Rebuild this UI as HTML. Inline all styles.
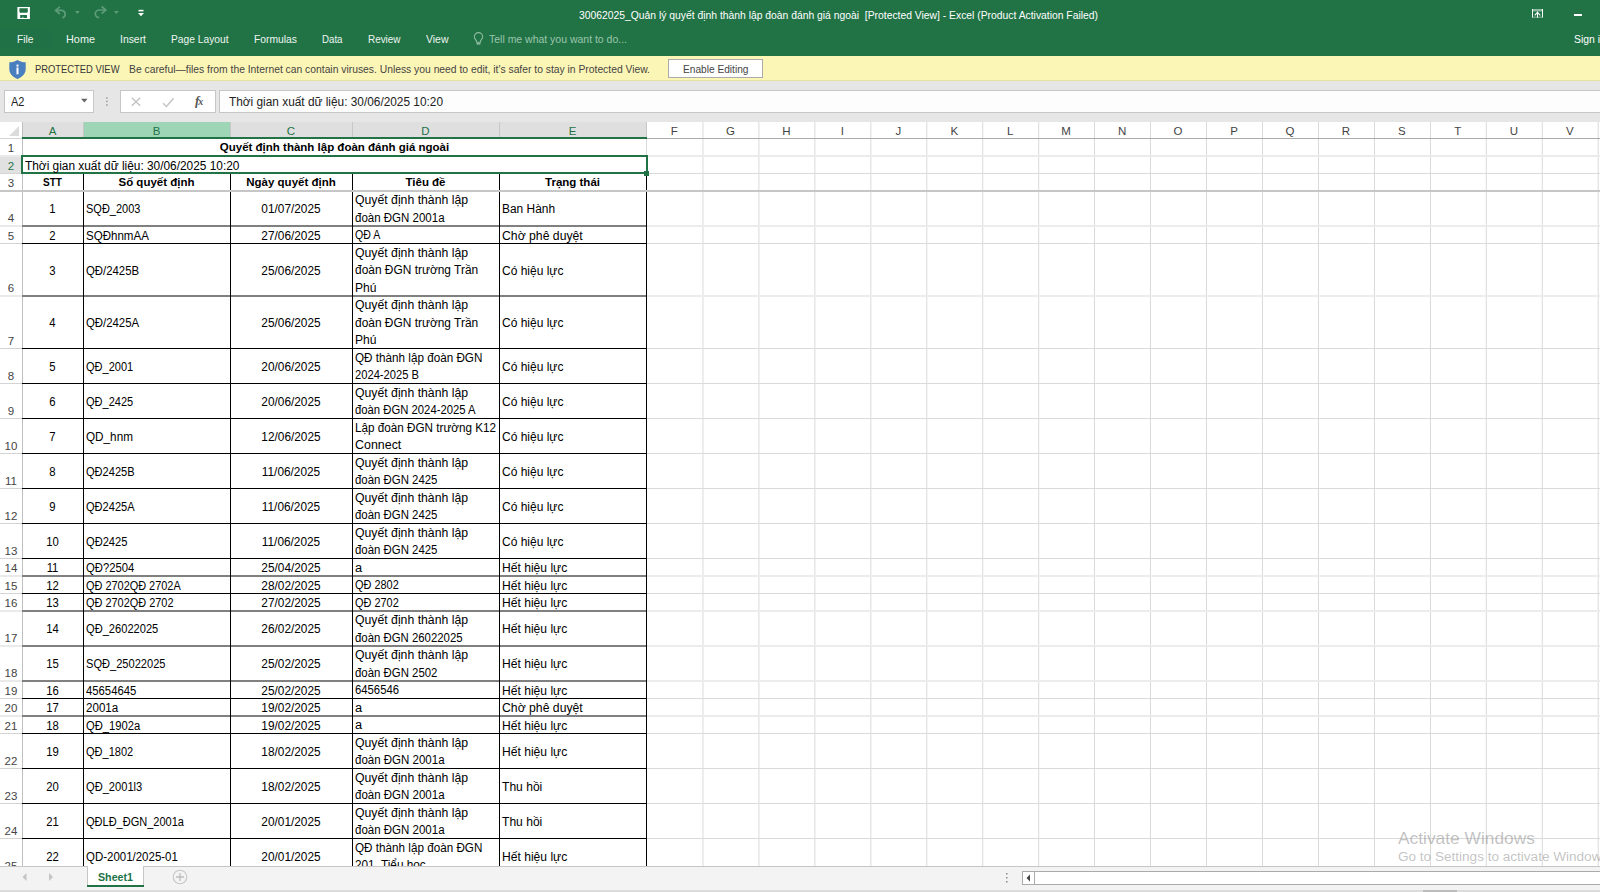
<!DOCTYPE html><html><head><meta charset="utf-8"><style>
*{margin:0;padding:0;box-sizing:border-box}
html,body{width:1600px;height:892px;overflow:hidden;background:#fff;font-family:"Liberation Sans",sans-serif}
.a{position:absolute;white-space:nowrap}
.f{position:absolute;white-space:nowrap;transform-origin:0 0}
.t{position:absolute;white-space:nowrap;font-size:12px;color:#111;line-height:17.5px}
.b{font-weight:bold;font-size:11.5px}
.g{position:absolute;background:#d9d9d9}
.k{position:absolute;background:#000}
.ch{position:absolute;font-size:12px;color:#444;text-align:center;line-height:16px}
.rh{position:absolute;font-size:12px;color:#444;text-align:center;left:0;width:22px;line-height:17px}
.c{}
</style></head><body>
<div class="a" style="left:0;top:0;width:1600px;height:56px;background:#217346"></div>
<svg class="a" style="left:17px;top:7px" width="13" height="12" viewBox="0 0 13 12"><path fill-rule="evenodd" fill="#fff" d="M0.4 0H12.9V12H0.4z M2.4 1.2H10.8V5L10.1 5.8H3.1L2.4 5z M3.2 8.1H10V11H6.3V9.8H5.5V11H3.2z"/></svg>
<svg class="a" style="left:50px;top:2px" width="100" height="22" viewBox="0 0 100 22"><g fill="none" stroke="#5e9c7a" stroke-width="1.7"><path d="M5.8 8.4H11.5A4.1 3.8 0 0 1 12.3 15.8"/><path d="M9.8 4.8L5.6 8.4L9.8 12"/><path d="M55.6 8H49.8A4.1 3.8 0 0 0 49 15.6"/><path d="M51.6 4.4L55.8 8L51.6 11.6"/></g><path d="M25 9h4.7l-2.35 2.9z M64 9h4.7l-2.35 2.9z" fill="#5e9c7a"/><g fill="#fff"><rect x="88.5" y="7.8" width="5" height="1.6"/><path d="M88 11h6l-3 3.2z"/></g></svg>
<svg class="a" style="left:1532px;top:9px" width="11" height="9" viewBox="0 0 11 9"><rect x="0" y="0" width="1" height="8.6" fill="#fff"/><rect x="10" y="0" width="1" height="8.6" fill="#fff"/><rect x="1" y="0" width="9" height="2.4" fill="#fff" fill-opacity="0.5"/><rect x="1" y="7.7" width="9" height="0.9" fill="#fff" fill-opacity="0.55"/><rect x="5" y="2.6" width="1" height="6" fill="#fff"/><path d="M2.7 6.3L5.5 3.4L8.3 6.3" fill="none" stroke="#fff" stroke-width="1.1"/></svg>
<div class="a" style="left:1574px;top:14px;width:8px;height:2px;background:#fff"></div>
<div class="a" style="left:0;top:29px;width:52px;height:20px;background:#207145"></div>
<svg class="a" style="left:470px;top:30px" width="16" height="18" viewBox="470 30 16 18"><path d="M478.5 32.6a4.2 4.2 0 0 0-4.2 4.2c0 1.8 1.4 3 2.2 4.1v1.3h4v-1.3c0.8-1.1 2.2-2.3 2.2-4.1a4.2 4.2 0 0 0-4.2-4.2z" fill="none" stroke="#8dbb9e" stroke-width="1.1"/><rect x="476.6" y="43" width="3.8" height="1.6" fill="#8dbb9e"/></svg>
<div class="a" style="left:0;top:56px;width:1600px;height:25px;background:#fcf6b6"></div>
<div class="a" style="left:0;top:80px;width:1600px;height:1px;background:#e6e2a2"></div>
<svg class="a" style="left:8px;top:59px" width="19" height="21" viewBox="0 0 19 21"><path d="M9.5 1 C7 2.6 4.2 3.3 1.3 3.3 V10 C1.3 14.6 4.8 18.2 9.5 20 C14.2 18.2 17.7 14.6 17.7 10 V3.3 C14.8 3.3 12 2.6 9.5 1z" fill="#4a7fbf"/><rect x="8.5" y="8.5" width="2" height="6.8" fill="#fff"/><rect x="8.5" y="5.6" width="2" height="2" fill="#fff"/></svg>
<div class="a" style="left:668px;top:59px;width:95px;height:19px;background:#fff;border:1px solid #ababab"></div>
<div class="a" style="left:0;top:81px;width:1600px;height:41px;background:#e6e6e6"></div>
<div class="a" style="left:4px;top:90px;width:90px;height:23px;background:#fff;border:1px solid #c6c6c6"></div>
<svg class="a" style="left:80px;top:98px" width="9" height="6" viewBox="0 0 9 6"><path d="M1 0.8h6.6l-3.3 3.6z" fill="#666"/></svg>
<svg class="a" style="left:105px;top:96px" width="4" height="12" viewBox="0 0 4 12"><g fill="#9a9a9a"><rect x="1.1" y="1.3" width="1.5" height="1.5"/><rect x="1.1" y="4.7" width="1.5" height="1.5"/><rect x="1.1" y="8.2" width="1.5" height="1.5"/></g></svg>
<div class="a" style="left:120px;top:90px;width:96px;height:23px;background:#fff;border:1px solid #c6c6c6"></div>
<svg class="a" style="left:130px;top:95px" width="80" height="14" viewBox="0 0 80 14"><g stroke="#c4c4c4" stroke-width="1.5" fill="none"><path d="M1.8 2.8l8.4 8M10.2 2.8l-8.4 8"/><path d="M33 8.2l3.5 3.3l7-8.2"/></g></svg>
<div class="a" style="left:195px;top:91.5px;font-family:'Liberation Serif',serif;font-style:italic;font-weight:bold;font-size:13px;color:#555;line-height:18px;letter-spacing:-1px">f<span style="font-size:10px">x</span></div>
<div class="a" style="left:219px;top:90px;width:1390px;height:23px;background:#fdfdfd;border:1px solid #c6c6c6"></div>
<div class="a" style="left:0;top:122px;width:1600px;height:744px;background:#fff"></div>
<div class="a" style="left:22px;top:122px;width:625px;height:16px;background:#dfdfdf"></div>
<div class="a" style="left:83px;top:122px;width:147px;height:16px;background:#9fd5b7"></div>
<svg class="a" style="left:0;top:122px" width="22" height="16" viewBox="0 0 22 16"><path d="M19 4 V14 H9z" fill="#dcdcdc"/></svg>
<div class="a" style="left:0;top:156px;width:22px;height:17px;background:#e1e1e1"></div>
<div class="a" style="left:83px;top:122px;width:1px;height:16px;background:#c8c8c8"></div>
<div class="a" style="left:230px;top:122px;width:1px;height:16px;background:#c8c8c8"></div>
<div class="a" style="left:352px;top:122px;width:1px;height:16px;background:#c8c8c8"></div>
<div class="a" style="left:499px;top:122px;width:1px;height:16px;background:#c8c8c8"></div>
<div class="a" style="left:646px;top:122px;width:1px;height:16px;background:#c8c8c8"></div>
<div class="a" style="left:702px;top:122px;width:1px;height:744px;background:#ebebeb"></div>
<div class="a" style="left:703px;top:122px;width:1px;height:744px;background:#eeeeee"></div>
<div class="a" style="left:758px;top:122px;width:1px;height:744px;background:#e9e9e9"></div>
<div class="a" style="left:759px;top:122px;width:1px;height:744px;background:#f0f0f0"></div>
<div class="a" style="left:814px;top:122px;width:1px;height:744px;background:#e7e7e7"></div>
<div class="a" style="left:815px;top:122px;width:1px;height:744px;background:#f2f2f2"></div>
<div class="a" style="left:870px;top:122px;width:1px;height:744px;background:#e6e6e6"></div>
<div class="a" style="left:871px;top:122px;width:1px;height:744px;background:#f3f3f3"></div>
<div class="a" style="left:926px;top:122px;width:1px;height:744px;background:#e4e4e4"></div>
<div class="a" style="left:927px;top:122px;width:1px;height:744px;background:#f5f5f5"></div>
<div class="a" style="left:982px;top:122px;width:1px;height:744px;background:#e2e2e2"></div>
<div class="a" style="left:983px;top:122px;width:1px;height:744px;background:#f7f7f7"></div>
<div class="a" style="left:1038px;top:122px;width:1px;height:744px;background:#e1e1e1"></div>
<div class="a" style="left:1039px;top:122px;width:1px;height:744px;background:#f8f8f8"></div>
<div class="a" style="left:1094px;top:122px;width:1px;height:744px;background:#dadada"></div>
<div class="a" style="left:1150px;top:122px;width:1px;height:744px;background:#dadada"></div>
<div class="a" style="left:1206px;top:122px;width:1px;height:744px;background:#dadada"></div>
<div class="a" style="left:1262px;top:122px;width:1px;height:744px;background:#dadada"></div>
<div class="a" style="left:1318px;top:122px;width:1px;height:744px;background:#dadada"></div>
<div class="a" style="left:1374px;top:122px;width:1px;height:744px;background:#dadada"></div>
<div class="a" style="left:1430px;top:122px;width:1px;height:744px;background:#dadada"></div>
<div class="a" style="left:1485px;top:122px;width:1px;height:744px;background:#f8f8f8"></div>
<div class="a" style="left:1486px;top:122px;width:1px;height:744px;background:#e1e1e1"></div>
<div class="a" style="left:1541px;top:122px;width:1px;height:744px;background:#f7f7f7"></div>
<div class="a" style="left:1542px;top:122px;width:1px;height:744px;background:#e2e2e2"></div>
<div class="a" style="left:1597px;top:122px;width:1px;height:744px;background:#f5f5f5"></div>
<div class="a" style="left:1598px;top:122px;width:1px;height:744px;background:#e4e4e4"></div>
<div class="a" style="left:646px;top:138px;width:1px;height:35px;background:#dadada"></div>
<div class="a" style="left:22px;top:122px;width:1px;height:744px;background:#c0c0c0"></div>
<div class="a" style="left:0px;top:155px;width:22px;height:2px;background:#eaeaea"></div>
<div class="a" style="left:647px;top:155px;width:953px;height:2px;background:#ececec"></div>
<div class="a" style="left:0px;top:173px;width:22px;height:1px;background:#d4d4d4"></div>
<div class="a" style="left:647px;top:173px;width:953px;height:1px;background:#dadada"></div>
<div class="a" style="left:0px;top:190px;width:22px;height:2px;background:#eaeaea"></div>
<div class="a" style="left:647px;top:190px;width:953px;height:2px;background:#ececec"></div>
<div class="a" style="left:0px;top:225px;width:22px;height:2px;background:#eaeaea"></div>
<div class="a" style="left:647px;top:225px;width:953px;height:2px;background:#ececec"></div>
<div class="a" style="left:0px;top:243px;width:22px;height:1px;background:#d4d4d4"></div>
<div class="a" style="left:647px;top:243px;width:953px;height:1px;background:#dadada"></div>
<div class="a" style="left:0px;top:295px;width:22px;height:2px;background:#eaeaea"></div>
<div class="a" style="left:647px;top:295px;width:953px;height:2px;background:#ececec"></div>
<div class="a" style="left:0px;top:348px;width:22px;height:1px;background:#d4d4d4"></div>
<div class="a" style="left:647px;top:348px;width:953px;height:1px;background:#dadada"></div>
<div class="a" style="left:0px;top:383px;width:22px;height:1px;background:#d4d4d4"></div>
<div class="a" style="left:647px;top:383px;width:953px;height:1px;background:#dadada"></div>
<div class="a" style="left:0px;top:418px;width:22px;height:1px;background:#d4d4d4"></div>
<div class="a" style="left:647px;top:418px;width:953px;height:1px;background:#dadada"></div>
<div class="a" style="left:0px;top:453px;width:22px;height:1px;background:#d4d4d4"></div>
<div class="a" style="left:647px;top:453px;width:953px;height:1px;background:#dadada"></div>
<div class="a" style="left:0px;top:488px;width:22px;height:1px;background:#d4d4d4"></div>
<div class="a" style="left:647px;top:488px;width:953px;height:1px;background:#dadada"></div>
<div class="a" style="left:0px;top:523px;width:22px;height:1px;background:#d4d4d4"></div>
<div class="a" style="left:647px;top:523px;width:953px;height:1px;background:#dadada"></div>
<div class="a" style="left:0px;top:558px;width:22px;height:1px;background:#d4d4d4"></div>
<div class="a" style="left:647px;top:558px;width:953px;height:1px;background:#dadada"></div>
<div class="a" style="left:0px;top:575px;width:22px;height:2px;background:#eaeaea"></div>
<div class="a" style="left:647px;top:575px;width:953px;height:2px;background:#ececec"></div>
<div class="a" style="left:0px;top:593px;width:22px;height:1px;background:#d4d4d4"></div>
<div class="a" style="left:647px;top:593px;width:953px;height:1px;background:#dadada"></div>
<div class="a" style="left:0px;top:610px;width:22px;height:2px;background:#eaeaea"></div>
<div class="a" style="left:647px;top:610px;width:953px;height:2px;background:#ececec"></div>
<div class="a" style="left:0px;top:645px;width:22px;height:2px;background:#eaeaea"></div>
<div class="a" style="left:647px;top:645px;width:953px;height:2px;background:#ececec"></div>
<div class="a" style="left:0px;top:680px;width:22px;height:2px;background:#eaeaea"></div>
<div class="a" style="left:647px;top:680px;width:953px;height:2px;background:#ececec"></div>
<div class="a" style="left:0px;top:698px;width:22px;height:1px;background:#d4d4d4"></div>
<div class="a" style="left:647px;top:698px;width:953px;height:1px;background:#dadada"></div>
<div class="a" style="left:0px;top:715px;width:22px;height:2px;background:#eaeaea"></div>
<div class="a" style="left:647px;top:715px;width:953px;height:2px;background:#ececec"></div>
<div class="a" style="left:0px;top:733px;width:22px;height:1px;background:#d4d4d4"></div>
<div class="a" style="left:647px;top:733px;width:953px;height:1px;background:#dadada"></div>
<div class="a" style="left:0px;top:768px;width:22px;height:1px;background:#d4d4d4"></div>
<div class="a" style="left:647px;top:768px;width:953px;height:1px;background:#dadada"></div>
<div class="a" style="left:0px;top:803px;width:22px;height:1px;background:#d4d4d4"></div>
<div class="a" style="left:647px;top:803px;width:953px;height:1px;background:#dadada"></div>
<div class="a" style="left:0px;top:838px;width:22px;height:1px;background:#d4d4d4"></div>
<div class="a" style="left:647px;top:838px;width:953px;height:1px;background:#dadada"></div>
<div class="a" style="left:0px;top:873px;width:22px;height:1px;background:#d4d4d4"></div>
<div class="a" style="left:647px;top:873px;width:953px;height:1px;background:#dadada"></div>
<div class="a" style="left:0px;top:138px;width:22px;height:1px;background:#d4d4d4"></div>
<div class="a" style="left:647px;top:138px;width:953px;height:1px;background:#ababab"></div>
<div class="a" style="left:22px;top:225px;width:625px;height:2px;background:#808080"></div>
<div class="a" style="left:22px;top:243px;width:625px;height:1px;background:#000000"></div>
<div class="a" style="left:22px;top:295px;width:625px;height:2px;background:#808080"></div>
<div class="a" style="left:22px;top:348px;width:625px;height:1px;background:#000000"></div>
<div class="a" style="left:22px;top:383px;width:625px;height:1px;background:#000000"></div>
<div class="a" style="left:22px;top:418px;width:625px;height:1px;background:#000000"></div>
<div class="a" style="left:22px;top:453px;width:625px;height:1px;background:#000000"></div>
<div class="a" style="left:22px;top:488px;width:625px;height:1px;background:#000000"></div>
<div class="a" style="left:22px;top:523px;width:625px;height:1px;background:#000000"></div>
<div class="a" style="left:22px;top:558px;width:625px;height:1px;background:#000000"></div>
<div class="a" style="left:22px;top:575px;width:625px;height:2px;background:#808080"></div>
<div class="a" style="left:22px;top:593px;width:625px;height:1px;background:#000000"></div>
<div class="a" style="left:22px;top:610px;width:625px;height:2px;background:#808080"></div>
<div class="a" style="left:22px;top:645px;width:625px;height:2px;background:#808080"></div>
<div class="a" style="left:22px;top:680px;width:625px;height:2px;background:#808080"></div>
<div class="a" style="left:22px;top:698px;width:625px;height:1px;background:#000000"></div>
<div class="a" style="left:22px;top:715px;width:625px;height:2px;background:#808080"></div>
<div class="a" style="left:22px;top:733px;width:625px;height:1px;background:#000000"></div>
<div class="a" style="left:22px;top:768px;width:625px;height:1px;background:#000000"></div>
<div class="a" style="left:22px;top:803px;width:625px;height:1px;background:#000000"></div>
<div class="a" style="left:22px;top:838px;width:625px;height:1px;background:#000000"></div>
<div class="a" style="left:22px;top:873px;width:625px;height:1px;background:#000000"></div>
<div class="a" style="left:83px;top:173px;width:1px;height:693px;background:#000"></div>
<div class="a" style="left:230px;top:173px;width:1px;height:693px;background:#000"></div>
<div class="a" style="left:352px;top:173px;width:1px;height:693px;background:#000"></div>
<div class="a" style="left:499px;top:173px;width:1px;height:693px;background:#000"></div>
<div class="a" style="left:646px;top:173px;width:1px;height:693px;background:#000"></div>
<div class="a" style="left:0;top:190px;width:1600px;height:2px;background:#c6c6c6"></div>
<div class="a" style="left:22px;top:137px;width:625px;height:2px;background:#217346"></div>
<div class="a" style="left:21px;top:155px;width:627px;height:19px;border:2px solid #217346"></div>
<div class="a" style="left:644px;top:171px;width:5px;height:5px;background:#217346"></div>
<div class="a" style="left:22.00px;top:126.27px;font-size:11.5px;line-height:11.5px;color:#217346;font-weight:400;width:61px;text-align:center">A</div>
<div class="a" style="left:83.00px;top:126.27px;font-size:11.5px;line-height:11.5px;color:#217346;font-weight:400;width:147px;text-align:center">B</div>
<div class="a" style="left:230.00px;top:126.27px;font-size:11.5px;line-height:11.5px;color:#217346;font-weight:400;width:122px;text-align:center">C</div>
<div class="a" style="left:352.00px;top:126.27px;font-size:11.5px;line-height:11.5px;color:#217346;font-weight:400;width:147px;text-align:center">D</div>
<div class="a" style="left:499.00px;top:126.27px;font-size:11.5px;line-height:11.5px;color:#217346;font-weight:400;width:147px;text-align:center">E</div>
<div class="a" style="left:646.00px;top:126.27px;font-size:11.5px;line-height:11.5px;color:#444;font-weight:400;width:56.45px;text-align:center">F</div>
<div class="a" style="left:702.45px;top:126.27px;font-size:11.5px;line-height:11.5px;color:#444;font-weight:400;width:55.96px;text-align:center">G</div>
<div class="a" style="left:758.41px;top:126.27px;font-size:11.5px;line-height:11.5px;color:#444;font-weight:400;width:55.95px;text-align:center">H</div>
<div class="a" style="left:814.36px;top:126.27px;font-size:11.5px;line-height:11.5px;color:#444;font-weight:400;width:55.96px;text-align:center">I</div>
<div class="a" style="left:870.32px;top:126.27px;font-size:11.5px;line-height:11.5px;color:#444;font-weight:400;width:55.95px;text-align:center">J</div>
<div class="a" style="left:926.27px;top:126.27px;font-size:11.5px;line-height:11.5px;color:#444;font-weight:400;width:55.96px;text-align:center">K</div>
<div class="a" style="left:982.23px;top:126.27px;font-size:11.5px;line-height:11.5px;color:#444;font-weight:400;width:55.96px;text-align:center">L</div>
<div class="a" style="left:1038.18px;top:126.27px;font-size:11.5px;line-height:11.5px;color:#444;font-weight:400;width:55.95px;text-align:center">M</div>
<div class="a" style="left:1094.13px;top:126.27px;font-size:11.5px;line-height:11.5px;color:#444;font-weight:400;width:55.96px;text-align:center">N</div>
<div class="a" style="left:1150.09px;top:126.27px;font-size:11.5px;line-height:11.5px;color:#444;font-weight:400;width:55.95px;text-align:center">O</div>
<div class="a" style="left:1206.05px;top:126.27px;font-size:11.5px;line-height:11.5px;color:#444;font-weight:400;width:55.95px;text-align:center">P</div>
<div class="a" style="left:1262.00px;top:126.27px;font-size:11.5px;line-height:11.5px;color:#444;font-weight:400;width:55.95px;text-align:center">Q</div>
<div class="a" style="left:1317.95px;top:126.27px;font-size:11.5px;line-height:11.5px;color:#444;font-weight:400;width:55.96px;text-align:center">R</div>
<div class="a" style="left:1373.91px;top:126.27px;font-size:11.5px;line-height:11.5px;color:#444;font-weight:400;width:55.95px;text-align:center">S</div>
<div class="a" style="left:1429.87px;top:126.27px;font-size:11.5px;line-height:11.5px;color:#444;font-weight:400;width:55.96px;text-align:center">T</div>
<div class="a" style="left:1485.82px;top:126.27px;font-size:11.5px;line-height:11.5px;color:#444;font-weight:400;width:55.95px;text-align:center">U</div>
<div class="a" style="left:1541.78px;top:126.27px;font-size:11.5px;line-height:11.5px;color:#444;font-weight:400;width:55.95px;text-align:center">V</div>
<div class="a" style="left:0.00px;top:143.27px;font-size:11.5px;line-height:11.5px;color:#444;font-weight:400;width:22px;text-align:center">1</div>
<div class="a" style="left:0.00px;top:160.77px;font-size:11.5px;line-height:11.5px;color:#217346;font-weight:400;width:22px;text-align:center">2</div>
<div class="a" style="left:0.00px;top:178.27px;font-size:11.5px;line-height:11.5px;color:#444;font-weight:400;width:22px;text-align:center">3</div>
<div class="a" style="left:0.00px;top:213.27px;font-size:11.5px;line-height:11.5px;color:#444;font-weight:400;width:22px;text-align:center">4</div>
<div class="a" style="left:0.00px;top:230.77px;font-size:11.5px;line-height:11.5px;color:#444;font-weight:400;width:22px;text-align:center">5</div>
<div class="a" style="left:0.00px;top:283.27px;font-size:11.5px;line-height:11.5px;color:#444;font-weight:400;width:22px;text-align:center">6</div>
<div class="a" style="left:0.00px;top:335.77px;font-size:11.5px;line-height:11.5px;color:#444;font-weight:400;width:22px;text-align:center">7</div>
<div class="a" style="left:0.00px;top:370.77px;font-size:11.5px;line-height:11.5px;color:#444;font-weight:400;width:22px;text-align:center">8</div>
<div class="a" style="left:0.00px;top:405.77px;font-size:11.5px;line-height:11.5px;color:#444;font-weight:400;width:22px;text-align:center">9</div>
<div class="a" style="left:0.00px;top:440.77px;font-size:11.5px;line-height:11.5px;color:#444;font-weight:400;width:22px;text-align:center">10</div>
<div class="a" style="left:0.00px;top:475.77px;font-size:11.5px;line-height:11.5px;color:#444;font-weight:400;width:22px;text-align:center">11</div>
<div class="a" style="left:0.00px;top:510.77px;font-size:11.5px;line-height:11.5px;color:#444;font-weight:400;width:22px;text-align:center">12</div>
<div class="a" style="left:0.00px;top:545.77px;font-size:11.5px;line-height:11.5px;color:#444;font-weight:400;width:22px;text-align:center">13</div>
<div class="a" style="left:0.00px;top:563.27px;font-size:11.5px;line-height:11.5px;color:#444;font-weight:400;width:22px;text-align:center">14</div>
<div class="a" style="left:0.00px;top:580.77px;font-size:11.5px;line-height:11.5px;color:#444;font-weight:400;width:22px;text-align:center">15</div>
<div class="a" style="left:0.00px;top:598.27px;font-size:11.5px;line-height:11.5px;color:#444;font-weight:400;width:22px;text-align:center">16</div>
<div class="a" style="left:0.00px;top:633.27px;font-size:11.5px;line-height:11.5px;color:#444;font-weight:400;width:22px;text-align:center">17</div>
<div class="a" style="left:0.00px;top:668.27px;font-size:11.5px;line-height:11.5px;color:#444;font-weight:400;width:22px;text-align:center">18</div>
<div class="a" style="left:0.00px;top:685.77px;font-size:11.5px;line-height:11.5px;color:#444;font-weight:400;width:22px;text-align:center">19</div>
<div class="a" style="left:0.00px;top:703.27px;font-size:11.5px;line-height:11.5px;color:#444;font-weight:400;width:22px;text-align:center">20</div>
<div class="a" style="left:0.00px;top:720.77px;font-size:11.5px;line-height:11.5px;color:#444;font-weight:400;width:22px;text-align:center">21</div>
<div class="a" style="left:0.00px;top:755.77px;font-size:11.5px;line-height:11.5px;color:#444;font-weight:400;width:22px;text-align:center">22</div>
<div class="a" style="left:0.00px;top:790.77px;font-size:11.5px;line-height:11.5px;color:#444;font-weight:400;width:22px;text-align:center">23</div>
<div class="a" style="left:0.00px;top:825.77px;font-size:11.5px;line-height:11.5px;color:#444;font-weight:400;width:22px;text-align:center">24</div>
<div class="a" style="left:0.00px;top:860.77px;font-size:11.5px;line-height:11.5px;color:#444;font-weight:400;width:22px;text-align:center">25</div>
<div class="a c" style="left:22.00px;top:142.27px;font-size:11.5px;line-height:11.5px;color:#000;font-weight:700;width:625px;text-align:center">Quyết định thành lập đoàn đánh giá ngoài</div>
<div class="a c" style="left:25.00px;top:159.84px;font-size:12px;line-height:12px;color:#000;font-weight:400;transform:scaleX(0.9893);transform-origin:0 0">Thời gian xuất dữ liệu: 30/06/2025 10:20</div>
<div class="a c" style="left:22.00px;top:177.27px;font-size:11.5px;line-height:11.5px;color:#000;font-weight:700;width:61px;text-align:center;transform:scaleX(0.8740);transform-origin:50% 0">STT</div>
<div class="a c" style="left:83.00px;top:177.27px;font-size:11.5px;line-height:11.5px;color:#000;font-weight:700;width:147px;text-align:center">Số quyết định</div>
<div class="a c" style="left:230.00px;top:177.27px;font-size:11.5px;line-height:11.5px;color:#000;font-weight:700;width:122px;text-align:center">Ngày quyết định</div>
<div class="a c" style="left:352.00px;top:177.27px;font-size:11.5px;line-height:11.5px;color:#000;font-weight:700;width:147px;text-align:center">Tiêu đề</div>
<div class="a c" style="left:499.00px;top:177.27px;font-size:11.5px;line-height:11.5px;color:#000;font-weight:700;width:147px;text-align:center">Trạng thái</div>
<div class="a c" style="left:22.00px;top:203.34px;font-size:12px;line-height:12px;color:#000;font-weight:400;width:61px;text-align:center;transform:scaleX(0.9420);transform-origin:50% 0">1</div>
<div class="a c" style="left:86.00px;top:203.34px;font-size:12px;line-height:12px;color:#000;font-weight:400;transform:scaleX(0.9157);transform-origin:0 0">SQĐ_2003</div>
<div class="a c" style="left:230.00px;top:203.34px;font-size:12px;line-height:12px;color:#000;font-weight:400;width:122px;text-align:center;transform:scaleX(0.9866);transform-origin:50% 0">01/07/2025</div>
<div class="a c" style="left:355.00px;top:194.34px;font-size:12px;line-height:12px;color:#000;font-weight:400;transform:scaleX(1.0209);transform-origin:0 0">Quyết định thành lập</div>
<div class="a c" style="left:355.00px;top:211.79px;font-size:12px;line-height:12px;color:#000;font-weight:400;transform:scaleX(0.9586);transform-origin:0 0">đoàn ĐGN 2001a</div>
<div class="a c" style="left:502.00px;top:203.34px;font-size:12px;line-height:12px;color:#000;font-weight:400;transform:scaleX(0.9935);transform-origin:0 0">Ban Hành</div>
<div class="a c" style="left:22.00px;top:229.59px;font-size:12px;line-height:12px;color:#000;font-weight:400;width:61px;text-align:center;transform:scaleX(0.9420);transform-origin:50% 0">2</div>
<div class="a c" style="left:86.00px;top:229.59px;font-size:12px;line-height:12px;color:#000;font-weight:400;transform:scaleX(0.9619);transform-origin:0 0">SQĐhnmAA</div>
<div class="a c" style="left:230.00px;top:229.59px;font-size:12px;line-height:12px;color:#000;font-weight:400;width:122px;text-align:center;transform:scaleX(0.9866);transform-origin:50% 0">27/06/2025</div>
<div class="a c" style="left:355.00px;top:229.34px;font-size:12px;line-height:12px;color:#000;font-weight:400;transform:scaleX(0.8799);transform-origin:0 0">QĐ A</div>
<div class="a c" style="left:502.00px;top:229.59px;font-size:12px;line-height:12px;color:#000;font-weight:400;transform:scaleX(1.0190);transform-origin:0 0">Chờ phê duyệt</div>
<div class="a c" style="left:22.00px;top:264.59px;font-size:12px;line-height:12px;color:#000;font-weight:400;width:61px;text-align:center;transform:scaleX(0.9420);transform-origin:50% 0">3</div>
<div class="a c" style="left:86.00px;top:264.59px;font-size:12px;line-height:12px;color:#000;font-weight:400;transform:scaleX(0.9478);transform-origin:0 0">QĐ/2425B</div>
<div class="a c" style="left:230.00px;top:264.59px;font-size:12px;line-height:12px;color:#000;font-weight:400;width:122px;text-align:center;transform:scaleX(0.9866);transform-origin:50% 0">25/06/2025</div>
<div class="a c" style="left:355.00px;top:246.84px;font-size:12px;line-height:12px;color:#000;font-weight:400;transform:scaleX(1.0209);transform-origin:0 0">Quyết định thành lập</div>
<div class="a c" style="left:355.00px;top:264.29px;font-size:12px;line-height:12px;color:#000;font-weight:400;transform:scaleX(0.9935);transform-origin:0 0">đoàn ĐGN trường Trần</div>
<div class="a c" style="left:355.00px;top:281.74px;font-size:12px;line-height:12px;color:#000;font-weight:400;transform:scaleX(1.0061);transform-origin:0 0">Phú</div>
<div class="a c" style="left:502.00px;top:264.59px;font-size:12px;line-height:12px;color:#000;font-weight:400">Có hiệu lực</div>
<div class="a c" style="left:22.00px;top:317.09px;font-size:12px;line-height:12px;color:#000;font-weight:400;width:61px;text-align:center;transform:scaleX(0.9420);transform-origin:50% 0">4</div>
<div class="a c" style="left:86.00px;top:317.09px;font-size:12px;line-height:12px;color:#000;font-weight:400;transform:scaleX(0.9478);transform-origin:0 0">QĐ/2425A</div>
<div class="a c" style="left:230.00px;top:317.09px;font-size:12px;line-height:12px;color:#000;font-weight:400;width:122px;text-align:center;transform:scaleX(0.9866);transform-origin:50% 0">25/06/2025</div>
<div class="a c" style="left:355.00px;top:299.34px;font-size:12px;line-height:12px;color:#000;font-weight:400;transform:scaleX(1.0209);transform-origin:0 0">Quyết định thành lập</div>
<div class="a c" style="left:355.00px;top:316.79px;font-size:12px;line-height:12px;color:#000;font-weight:400;transform:scaleX(0.9935);transform-origin:0 0">đoàn ĐGN trường Trần</div>
<div class="a c" style="left:355.00px;top:334.24px;font-size:12px;line-height:12px;color:#000;font-weight:400;transform:scaleX(1.0061);transform-origin:0 0">Phú</div>
<div class="a c" style="left:502.00px;top:317.09px;font-size:12px;line-height:12px;color:#000;font-weight:400">Có hiệu lực</div>
<div class="a c" style="left:22.00px;top:360.84px;font-size:12px;line-height:12px;color:#000;font-weight:400;width:61px;text-align:center;transform:scaleX(0.9420);transform-origin:50% 0">5</div>
<div class="a c" style="left:86.00px;top:360.84px;font-size:12px;line-height:12px;color:#000;font-weight:400;transform:scaleX(0.9177);transform-origin:0 0">QĐ_2001</div>
<div class="a c" style="left:230.00px;top:360.84px;font-size:12px;line-height:12px;color:#000;font-weight:400;width:122px;text-align:center;transform:scaleX(0.9866);transform-origin:50% 0">20/06/2025</div>
<div class="a c" style="left:355.00px;top:351.84px;font-size:12px;line-height:12px;color:#000;font-weight:400;transform:scaleX(0.9741);transform-origin:0 0">QĐ thành lập đoàn ĐGN</div>
<div class="a c" style="left:355.00px;top:369.29px;font-size:12px;line-height:12px;color:#000;font-weight:400;transform:scaleX(0.9310);transform-origin:0 0">2024-2025 B</div>
<div class="a c" style="left:502.00px;top:360.84px;font-size:12px;line-height:12px;color:#000;font-weight:400">Có hiệu lực</div>
<div class="a c" style="left:22.00px;top:395.84px;font-size:12px;line-height:12px;color:#000;font-weight:400;width:61px;text-align:center;transform:scaleX(0.9420);transform-origin:50% 0">6</div>
<div class="a c" style="left:86.00px;top:395.84px;font-size:12px;line-height:12px;color:#000;font-weight:400;transform:scaleX(0.9177);transform-origin:0 0">QĐ_2425</div>
<div class="a c" style="left:230.00px;top:395.84px;font-size:12px;line-height:12px;color:#000;font-weight:400;width:122px;text-align:center;transform:scaleX(0.9866);transform-origin:50% 0">20/06/2025</div>
<div class="a c" style="left:355.00px;top:386.84px;font-size:12px;line-height:12px;color:#000;font-weight:400;transform:scaleX(1.0209);transform-origin:0 0">Quyết định thành lập</div>
<div class="a c" style="left:355.00px;top:404.29px;font-size:12px;line-height:12px;color:#000;font-weight:400;transform:scaleX(0.9416);transform-origin:0 0">đoàn ĐGN 2024-2025 A</div>
<div class="a c" style="left:502.00px;top:395.84px;font-size:12px;line-height:12px;color:#000;font-weight:400">Có hiệu lực</div>
<div class="a c" style="left:22.00px;top:430.84px;font-size:12px;line-height:12px;color:#000;font-weight:400;width:61px;text-align:center;transform:scaleX(0.9420);transform-origin:50% 0">7</div>
<div class="a c" style="left:86.00px;top:430.84px;font-size:12px;line-height:12px;color:#000;font-weight:400;transform:scaleX(0.9772);transform-origin:0 0">QD_hnm</div>
<div class="a c" style="left:230.00px;top:430.84px;font-size:12px;line-height:12px;color:#000;font-weight:400;width:122px;text-align:center;transform:scaleX(0.9866);transform-origin:50% 0">12/06/2025</div>
<div class="a c" style="left:355.00px;top:421.84px;font-size:12px;line-height:12px;color:#000;font-weight:400;transform:scaleX(0.9753);transform-origin:0 0">Lập đoàn ĐGN trường K12</div>
<div class="a c" style="left:355.00px;top:439.29px;font-size:12px;line-height:12px;color:#000;font-weight:400;transform:scaleX(1.0360);transform-origin:0 0">Connect</div>
<div class="a c" style="left:502.00px;top:430.84px;font-size:12px;line-height:12px;color:#000;font-weight:400">Có hiệu lực</div>
<div class="a c" style="left:22.00px;top:465.84px;font-size:12px;line-height:12px;color:#000;font-weight:400;width:61px;text-align:center;transform:scaleX(0.9420);transform-origin:50% 0">8</div>
<div class="a c" style="left:86.00px;top:465.84px;font-size:12px;line-height:12px;color:#000;font-weight:400;transform:scaleX(0.9228);transform-origin:0 0">QĐ2425B</div>
<div class="a c" style="left:230.00px;top:465.84px;font-size:12px;line-height:12px;color:#000;font-weight:400;width:122px;text-align:center;transform:scaleX(0.9866);transform-origin:50% 0">11/06/2025</div>
<div class="a c" style="left:355.00px;top:456.84px;font-size:12px;line-height:12px;color:#000;font-weight:400;transform:scaleX(1.0209);transform-origin:0 0">Quyết định thành lập</div>
<div class="a c" style="left:355.00px;top:474.29px;font-size:12px;line-height:12px;color:#000;font-weight:400;transform:scaleX(0.9502);transform-origin:0 0">đoàn ĐGN 2425</div>
<div class="a c" style="left:502.00px;top:465.84px;font-size:12px;line-height:12px;color:#000;font-weight:400">Có hiệu lực</div>
<div class="a c" style="left:22.00px;top:500.84px;font-size:12px;line-height:12px;color:#000;font-weight:400;width:61px;text-align:center;transform:scaleX(0.9420);transform-origin:50% 0">9</div>
<div class="a c" style="left:86.00px;top:500.84px;font-size:12px;line-height:12px;color:#000;font-weight:400;transform:scaleX(0.9228);transform-origin:0 0">QĐ2425A</div>
<div class="a c" style="left:230.00px;top:500.84px;font-size:12px;line-height:12px;color:#000;font-weight:400;width:122px;text-align:center;transform:scaleX(0.9866);transform-origin:50% 0">11/06/2025</div>
<div class="a c" style="left:355.00px;top:491.84px;font-size:12px;line-height:12px;color:#000;font-weight:400;transform:scaleX(1.0209);transform-origin:0 0">Quyết định thành lập</div>
<div class="a c" style="left:355.00px;top:509.29px;font-size:12px;line-height:12px;color:#000;font-weight:400;transform:scaleX(0.9502);transform-origin:0 0">đoàn ĐGN 2425</div>
<div class="a c" style="left:502.00px;top:500.84px;font-size:12px;line-height:12px;color:#000;font-weight:400">Có hiệu lực</div>
<div class="a c" style="left:22.00px;top:535.84px;font-size:12px;line-height:12px;color:#000;font-weight:400;width:61px;text-align:center;transform:scaleX(0.9420);transform-origin:50% 0">10</div>
<div class="a c" style="left:86.00px;top:535.84px;font-size:12px;line-height:12px;color:#000;font-weight:400;transform:scaleX(0.9263);transform-origin:0 0">QĐ2425</div>
<div class="a c" style="left:230.00px;top:535.84px;font-size:12px;line-height:12px;color:#000;font-weight:400;width:122px;text-align:center;transform:scaleX(0.9866);transform-origin:50% 0">11/06/2025</div>
<div class="a c" style="left:355.00px;top:526.84px;font-size:12px;line-height:12px;color:#000;font-weight:400;transform:scaleX(1.0209);transform-origin:0 0">Quyết định thành lập</div>
<div class="a c" style="left:355.00px;top:544.29px;font-size:12px;line-height:12px;color:#000;font-weight:400;transform:scaleX(0.9502);transform-origin:0 0">đoàn ĐGN 2425</div>
<div class="a c" style="left:502.00px;top:535.84px;font-size:12px;line-height:12px;color:#000;font-weight:400">Có hiệu lực</div>
<div class="a c" style="left:22.00px;top:562.09px;font-size:12px;line-height:12px;color:#000;font-weight:400;width:61px;text-align:center;transform:scaleX(0.9420);transform-origin:50% 0">11</div>
<div class="a c" style="left:86.00px;top:562.09px;font-size:12px;line-height:12px;color:#000;font-weight:400;transform:scaleX(0.9400);transform-origin:0 0">QĐ?2504</div>
<div class="a c" style="left:230.00px;top:562.09px;font-size:12px;line-height:12px;color:#000;font-weight:400;width:122px;text-align:center;transform:scaleX(0.9866);transform-origin:50% 0">25/04/2025</div>
<div class="a c" style="left:355.00px;top:561.84px;font-size:12px;line-height:12px;color:#000;font-weight:400;transform:scaleX(1.0680);transform-origin:0 0">a</div>
<div class="a c" style="left:502.00px;top:562.09px;font-size:12px;line-height:12px;color:#000;font-weight:400;transform:scaleX(1.0080);transform-origin:0 0">Hết hiệu lực</div>
<div class="a c" style="left:22.00px;top:579.59px;font-size:12px;line-height:12px;color:#000;font-weight:400;width:61px;text-align:center;transform:scaleX(0.9420);transform-origin:50% 0">12</div>
<div class="a c" style="left:86.00px;top:579.59px;font-size:12px;line-height:12px;color:#000;font-weight:400;transform:scaleX(0.9100);transform-origin:0 0">QĐ 2702QĐ 2702A</div>
<div class="a c" style="left:230.00px;top:579.59px;font-size:12px;line-height:12px;color:#000;font-weight:400;width:122px;text-align:center;transform:scaleX(0.9866);transform-origin:50% 0">28/02/2025</div>
<div class="a c" style="left:355.00px;top:579.34px;font-size:12px;line-height:12px;color:#000;font-weight:400;transform:scaleX(0.9106);transform-origin:0 0">QĐ 2802</div>
<div class="a c" style="left:502.00px;top:579.59px;font-size:12px;line-height:12px;color:#000;font-weight:400;transform:scaleX(1.0080);transform-origin:0 0">Hết hiệu lực</div>
<div class="a c" style="left:22.00px;top:597.09px;font-size:12px;line-height:12px;color:#000;font-weight:400;width:61px;text-align:center;transform:scaleX(0.9420);transform-origin:50% 0">13</div>
<div class="a c" style="left:86.00px;top:597.09px;font-size:12px;line-height:12px;color:#000;font-weight:400;transform:scaleX(0.9106);transform-origin:0 0">QĐ 2702QĐ 2702</div>
<div class="a c" style="left:230.00px;top:597.09px;font-size:12px;line-height:12px;color:#000;font-weight:400;width:122px;text-align:center;transform:scaleX(0.9866);transform-origin:50% 0">27/02/2025</div>
<div class="a c" style="left:355.00px;top:596.84px;font-size:12px;line-height:12px;color:#000;font-weight:400;transform:scaleX(0.9106);transform-origin:0 0">QĐ 2702</div>
<div class="a c" style="left:502.00px;top:597.09px;font-size:12px;line-height:12px;color:#000;font-weight:400;transform:scaleX(1.0080);transform-origin:0 0">Hết hiệu lực</div>
<div class="a c" style="left:22.00px;top:623.34px;font-size:12px;line-height:12px;color:#000;font-weight:400;width:61px;text-align:center;transform:scaleX(0.9420);transform-origin:50% 0">14</div>
<div class="a c" style="left:86.00px;top:623.34px;font-size:12px;line-height:12px;color:#000;font-weight:400;transform:scaleX(0.9260);transform-origin:0 0">QĐ_26022025</div>
<div class="a c" style="left:230.00px;top:623.34px;font-size:12px;line-height:12px;color:#000;font-weight:400;width:122px;text-align:center;transform:scaleX(0.9866);transform-origin:50% 0">26/02/2025</div>
<div class="a c" style="left:355.00px;top:614.34px;font-size:12px;line-height:12px;color:#000;font-weight:400;transform:scaleX(1.0209);transform-origin:0 0">Quyết định thành lập</div>
<div class="a c" style="left:355.00px;top:631.79px;font-size:12px;line-height:12px;color:#000;font-weight:400;transform:scaleX(0.9483);transform-origin:0 0">đoàn ĐGN 26022025</div>
<div class="a c" style="left:502.00px;top:623.34px;font-size:12px;line-height:12px;color:#000;font-weight:400;transform:scaleX(1.0080);transform-origin:0 0">Hết hiệu lực</div>
<div class="a c" style="left:22.00px;top:658.34px;font-size:12px;line-height:12px;color:#000;font-weight:400;width:61px;text-align:center;transform:scaleX(0.9420);transform-origin:50% 0">15</div>
<div class="a c" style="left:86.00px;top:658.34px;font-size:12px;line-height:12px;color:#000;font-weight:400;transform:scaleX(0.9239);transform-origin:0 0">SQĐ_25022025</div>
<div class="a c" style="left:230.00px;top:658.34px;font-size:12px;line-height:12px;color:#000;font-weight:400;width:122px;text-align:center;transform:scaleX(0.9866);transform-origin:50% 0">25/02/2025</div>
<div class="a c" style="left:355.00px;top:649.34px;font-size:12px;line-height:12px;color:#000;font-weight:400;transform:scaleX(1.0209);transform-origin:0 0">Quyết định thành lập</div>
<div class="a c" style="left:355.00px;top:666.79px;font-size:12px;line-height:12px;color:#000;font-weight:400;transform:scaleX(0.9502);transform-origin:0 0">đoàn ĐGN 2502</div>
<div class="a c" style="left:502.00px;top:658.34px;font-size:12px;line-height:12px;color:#000;font-weight:400;transform:scaleX(1.0080);transform-origin:0 0">Hết hiệu lực</div>
<div class="a c" style="left:22.00px;top:684.59px;font-size:12px;line-height:12px;color:#000;font-weight:400;width:61px;text-align:center;transform:scaleX(0.9420);transform-origin:50% 0">16</div>
<div class="a c" style="left:86.00px;top:684.59px;font-size:12px;line-height:12px;color:#000;font-weight:400;transform:scaleX(0.9420);transform-origin:0 0">45654645</div>
<div class="a c" style="left:230.00px;top:684.59px;font-size:12px;line-height:12px;color:#000;font-weight:400;width:122px;text-align:center;transform:scaleX(0.9866);transform-origin:50% 0">25/02/2025</div>
<div class="a c" style="left:355.00px;top:684.34px;font-size:12px;line-height:12px;color:#000;font-weight:400;transform:scaleX(0.9420);transform-origin:0 0">6456546</div>
<div class="a c" style="left:502.00px;top:684.59px;font-size:12px;line-height:12px;color:#000;font-weight:400;transform:scaleX(1.0080);transform-origin:0 0">Hết hiệu lực</div>
<div class="a c" style="left:22.00px;top:702.09px;font-size:12px;line-height:12px;color:#000;font-weight:400;width:61px;text-align:center;transform:scaleX(0.9420);transform-origin:50% 0">17</div>
<div class="a c" style="left:86.00px;top:702.09px;font-size:12px;line-height:12px;color:#000;font-weight:400;transform:scaleX(0.9672);transform-origin:0 0">2001a</div>
<div class="a c" style="left:230.00px;top:702.09px;font-size:12px;line-height:12px;color:#000;font-weight:400;width:122px;text-align:center;transform:scaleX(0.9866);transform-origin:50% 0">19/02/2025</div>
<div class="a c" style="left:355.00px;top:701.84px;font-size:12px;line-height:12px;color:#000;font-weight:400;transform:scaleX(1.0680);transform-origin:0 0">a</div>
<div class="a c" style="left:502.00px;top:702.09px;font-size:12px;line-height:12px;color:#000;font-weight:400;transform:scaleX(1.0190);transform-origin:0 0">Chờ phê duyệt</div>
<div class="a c" style="left:22.00px;top:719.59px;font-size:12px;line-height:12px;color:#000;font-weight:400;width:61px;text-align:center;transform:scaleX(0.9420);transform-origin:50% 0">18</div>
<div class="a c" style="left:86.00px;top:719.59px;font-size:12px;line-height:12px;color:#000;font-weight:400;transform:scaleX(0.9350);transform-origin:0 0">QĐ_1902a</div>
<div class="a c" style="left:230.00px;top:719.59px;font-size:12px;line-height:12px;color:#000;font-weight:400;width:122px;text-align:center;transform:scaleX(0.9866);transform-origin:50% 0">19/02/2025</div>
<div class="a c" style="left:355.00px;top:719.34px;font-size:12px;line-height:12px;color:#000;font-weight:400;transform:scaleX(1.0680);transform-origin:0 0">a</div>
<div class="a c" style="left:502.00px;top:719.59px;font-size:12px;line-height:12px;color:#000;font-weight:400;transform:scaleX(1.0080);transform-origin:0 0">Hết hiệu lực</div>
<div class="a c" style="left:22.00px;top:745.84px;font-size:12px;line-height:12px;color:#000;font-weight:400;width:61px;text-align:center;transform:scaleX(0.9420);transform-origin:50% 0">19</div>
<div class="a c" style="left:86.00px;top:745.84px;font-size:12px;line-height:12px;color:#000;font-weight:400;transform:scaleX(0.9177);transform-origin:0 0">QĐ_1802</div>
<div class="a c" style="left:230.00px;top:745.84px;font-size:12px;line-height:12px;color:#000;font-weight:400;width:122px;text-align:center;transform:scaleX(0.9866);transform-origin:50% 0">18/02/2025</div>
<div class="a c" style="left:355.00px;top:736.84px;font-size:12px;line-height:12px;color:#000;font-weight:400;transform:scaleX(1.0209);transform-origin:0 0">Quyết định thành lập</div>
<div class="a c" style="left:355.00px;top:754.29px;font-size:12px;line-height:12px;color:#000;font-weight:400;transform:scaleX(0.9586);transform-origin:0 0">đoàn ĐGN 2001a</div>
<div class="a c" style="left:502.00px;top:745.84px;font-size:12px;line-height:12px;color:#000;font-weight:400;transform:scaleX(1.0080);transform-origin:0 0">Hết hiệu lực</div>
<div class="a c" style="left:22.00px;top:780.84px;font-size:12px;line-height:12px;color:#000;font-weight:400;width:61px;text-align:center;transform:scaleX(0.9420);transform-origin:50% 0">20</div>
<div class="a c" style="left:86.00px;top:780.84px;font-size:12px;line-height:12px;color:#000;font-weight:400;transform:scaleX(0.9270);transform-origin:0 0">QĐ_2001l3</div>
<div class="a c" style="left:230.00px;top:780.84px;font-size:12px;line-height:12px;color:#000;font-weight:400;width:122px;text-align:center;transform:scaleX(0.9866);transform-origin:50% 0">18/02/2025</div>
<div class="a c" style="left:355.00px;top:771.84px;font-size:12px;line-height:12px;color:#000;font-weight:400;transform:scaleX(1.0209);transform-origin:0 0">Quyết định thành lập</div>
<div class="a c" style="left:355.00px;top:789.29px;font-size:12px;line-height:12px;color:#000;font-weight:400;transform:scaleX(0.9586);transform-origin:0 0">đoàn ĐGN 2001a</div>
<div class="a c" style="left:502.00px;top:780.84px;font-size:12px;line-height:12px;color:#000;font-weight:400;transform:scaleX(1.0071);transform-origin:0 0">Thu hồi</div>
<div class="a c" style="left:22.00px;top:815.84px;font-size:12px;line-height:12px;color:#000;font-weight:400;width:61px;text-align:center;transform:scaleX(0.9420);transform-origin:50% 0">21</div>
<div class="a c" style="left:86.00px;top:815.84px;font-size:12px;line-height:12px;color:#000;font-weight:400;transform:scaleX(0.9177);transform-origin:0 0">QĐLĐ_ĐGN_2001a</div>
<div class="a c" style="left:230.00px;top:815.84px;font-size:12px;line-height:12px;color:#000;font-weight:400;width:122px;text-align:center;transform:scaleX(0.9866);transform-origin:50% 0">20/01/2025</div>
<div class="a c" style="left:355.00px;top:806.84px;font-size:12px;line-height:12px;color:#000;font-weight:400;transform:scaleX(1.0209);transform-origin:0 0">Quyết định thành lập</div>
<div class="a c" style="left:355.00px;top:824.29px;font-size:12px;line-height:12px;color:#000;font-weight:400;transform:scaleX(0.9586);transform-origin:0 0">đoàn ĐGN 2001a</div>
<div class="a c" style="left:502.00px;top:815.84px;font-size:12px;line-height:12px;color:#000;font-weight:400;transform:scaleX(1.0071);transform-origin:0 0">Thu hồi</div>
<div class="a c" style="left:22.00px;top:850.84px;font-size:12px;line-height:12px;color:#000;font-weight:400;width:61px;text-align:center;transform:scaleX(0.9420);transform-origin:50% 0">22</div>
<div class="a c" style="left:86.00px;top:850.84px;font-size:12px;line-height:12px;color:#000;font-weight:400;transform:scaleX(0.9561);transform-origin:0 0">QD-2001/2025-01</div>
<div class="a c" style="left:230.00px;top:850.84px;font-size:12px;line-height:12px;color:#000;font-weight:400;width:122px;text-align:center;transform:scaleX(0.9866);transform-origin:50% 0">20/01/2025</div>
<div class="a c" style="left:355.00px;top:841.84px;font-size:12px;line-height:12px;color:#000;font-weight:400;transform:scaleX(0.9741);transform-origin:0 0">QĐ thành lập đoàn ĐGN</div>
<div class="a c" style="left:355.00px;top:859.29px;font-size:12px;line-height:12px;color:#000;font-weight:400;transform:scaleX(0.9813);transform-origin:0 0">201, Tiểu học</div>
<div class="a c" style="left:502.00px;top:850.84px;font-size:12px;line-height:12px;color:#000;font-weight:400;transform:scaleX(1.0080);transform-origin:0 0">Hết hiệu lực</div>
<div class="a" style="left:0;top:866px;width:1600px;height:26px;background:#f3f3f3;border-top:1px solid #c6c6c6"></div>
<div class="a" style="left:0;top:890px;width:1600px;height:2px;background:#dcdcdc"></div>
<div class="a" style="left:1423px;top:890px;width:34px;height:2px;background:#bcbcbc"></div>
<svg class="a" style="left:18px;top:871px" width="40" height="12" viewBox="0 0 40 12"><path d="M8.5 2 L4.5 6 L8.5 10z M31 2 L35 6 L31 10z" fill="#c4c4c4"/></svg>
<div class="a" style="left:87px;top:866px;width:57px;height:21px;background:#fff;border:1px solid #c6c6c6;border-top:none"></div>
<div class="a" style="left:87px;top:885px;width:57px;height:2px;background:#217346"></div>
<svg class="a" style="left:172px;top:869px" width="16" height="16" viewBox="0 0 16 16"><circle cx="8" cy="8" r="6.8" fill="none" stroke="#c6c6c6" stroke-width="1.1"/><path d="M8 4v8M4 8h8" stroke="#bdbdbd" stroke-width="1.3"/></svg>
<svg class="a" style="left:1005px;top:872px" width="4" height="12" viewBox="0 0 4 12"><g fill="#8a8a8a"><rect x="1" y="1" width="1.5" height="1.5"/><rect x="1" y="5" width="1.5" height="1.5"/><rect x="1" y="9" width="1.5" height="1.5"/></g></svg>
<div class="a" style="left:1022px;top:871px;width:590px;height:14px;background:#fff;border:1px solid #ababab"></div>
<div class="a" style="left:1034px;top:872px;width:1px;height:12px;background:#ababab"></div>
<svg class="a" style="left:1024px;top:873px" width="8" height="10" viewBox="0 0 8 10"><path d="M6 1.5 L2.5 5 L6 8.5z" fill="#444"/></svg>
<div class="f" style="left:579.00px;top:9.69px;font-size:11px;line-height:11px;color:#fff;font-weight:400;transform:scaleX(0.9402)">30062025_Quản lý quyết định thành lập đoàn đánh giá ngoài&nbsp; [Protected View] - Excel (Product Activation Failed)</div>
<div class="f" style="left:17.00px;top:33.52px;font-size:11.2px;line-height:11.2px;color:#eef5f0;font-weight:400;transform:scaleX(0.9151)">File</div>
<div class="f" style="left:66.00px;top:33.52px;font-size:11.2px;line-height:11.2px;color:#eef5f0;font-weight:400;transform:scaleX(0.9717)">Home</div>
<div class="f" style="left:120.00px;top:33.52px;font-size:11.2px;line-height:11.2px;color:#eef5f0;font-weight:400;transform:scaleX(0.9291)">Insert</div>
<div class="f" style="left:171.00px;top:33.52px;font-size:11.2px;line-height:11.2px;color:#eef5f0;font-weight:400;transform:scaleX(0.9152)">Page Layout</div>
<div class="f" style="left:253.50px;top:33.52px;font-size:11.2px;line-height:11.2px;color:#eef5f0;font-weight:400;transform:scaleX(0.9223)">Formulas</div>
<div class="f" style="left:322.00px;top:33.52px;font-size:11.2px;line-height:11.2px;color:#eef5f0;font-weight:400;transform:scaleX(0.8672)">Data</div>
<div class="f" style="left:368.00px;top:33.52px;font-size:11.2px;line-height:11.2px;color:#eef5f0;font-weight:400;transform:scaleX(0.8859)">Review</div>
<div class="f" style="left:425.50px;top:33.52px;font-size:11.2px;line-height:11.2px;color:#eef5f0;font-weight:400;transform:scaleX(0.9357)">View</div>
<div class="f" style="left:488.50px;top:33.52px;font-size:11.2px;line-height:11.2px;color:#9cc5ab;font-weight:400;transform:scaleX(0.9363)">Tell me what you want to do...</div>
<div class="f" style="left:1573.50px;top:33.52px;font-size:11.2px;line-height:11.2px;color:#fff;font-weight:400;transform:scaleX(0.9286)">Sign i</div>
<div class="f" style="left:35.00px;top:64.11px;font-size:10.5px;line-height:10.5px;color:#363636;font-weight:400;transform:scaleX(0.8940)">PROTECTED VIEW</div>
<div class="f" style="left:128.50px;top:64.11px;font-size:10.5px;line-height:10.5px;color:#444;font-weight:400;transform:scaleX(0.9830)">Be careful—files from the Internet can contain viruses. Unless you need to edit, it's safer to stay in Protected View.</div>
<div class="f" style="left:682.50px;top:64.11px;font-size:10.5px;line-height:10.5px;color:#444;font-weight:400;transform:scaleX(0.9672)">Enable Editing</div>
<div class="f" style="left:10.50px;top:95.84px;font-size:12px;line-height:12px;color:#222;font-weight:400;transform:scaleX(0.9191)">A2</div>
<div class="f" style="left:229.00px;top:95.84px;font-size:12px;line-height:12px;color:#222;font-weight:400;transform:scaleX(0.9874)">Thời gian xuất dữ liệu: 30/06/2025 10:20</div>
<div class="f" style="left:1398.00px;top:829.61px;font-size:17px;line-height:17px;color:rgba(120,120,120,0.45);font-weight:400;transform:scaleX(1.0211)">Activate Windows</div>
<div class="f" style="left:1398.00px;top:851.42px;font-size:12.5px;line-height:12.5px;color:rgba(120,120,120,0.45);font-weight:400;transform:scaleX(1.0845)">Go to Settings to activate Windows.</div>
<div class="f" style="left:98.00px;top:872.27px;font-size:11.5px;line-height:11.5px;color:#217346;font-weight:700;transform:scaleX(0.9279)">Sheet1</div>
</body></html>
